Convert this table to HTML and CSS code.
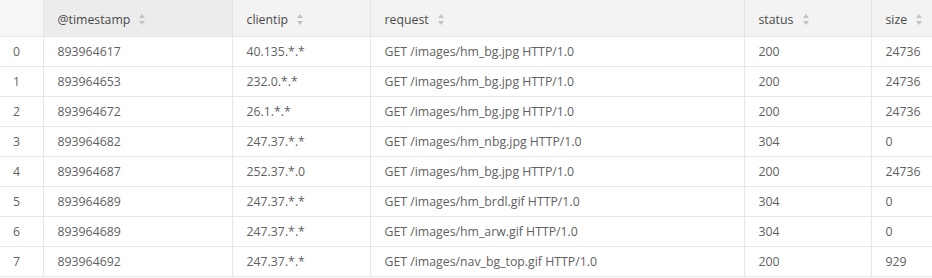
FILE: index.html
```html
<!DOCTYPE html>
<html lang="en">
<head>
    <meta charset="UTF-8">
    <title>Logs table</title>
    <link rel="stylesheet" href="styles.css">
</head>
<body>
    <table class="log-table">
        <colgroup>
            <col class="col-index">
            <col class="col-ts">
            <col class="col-ip">
            <col class="col-req">
            <col class="col-status">
            <col class="col-size">
        </colgroup>
        <thead>
            <tr>
                <th class="index-cell"></th>
                <th class="sorted">@timestamp <span class="sort-icon"></span></th>
                <th>clientip <span class="sort-icon"></span></th>
                <th>request <span class="sort-icon"></span></th>
                <th>status <span class="sort-icon"></span></th>
                <th>size <span class="sort-icon"></span></th>
            </tr>
        </thead>
        <tbody>
            <tr><td class="index-cell">0</td><td>893964617</td><td>40.135.*.*</td><td>GET /images/hm_bg.jpg HTTP/1.0</td><td>200</td><td>24736</td></tr>
            <tr><td class="index-cell">1</td><td>893964653</td><td>232.0.*.*</td><td>GET /images/hm_bg.jpg HTTP/1.0</td><td>200</td><td>24736</td></tr>
            <tr><td class="index-cell">2</td><td>893964672</td><td>26.1.*.*</td><td>GET /images/hm_bg.jpg HTTP/1.0</td><td>200</td><td>24736</td></tr>
            <tr><td class="index-cell">3</td><td>893964682</td><td>247.37.*.*</td><td>GET /images/hm_nbg.jpg HTTP/1.0</td><td>304</td><td>0</td></tr>
            <tr><td class="index-cell">4</td><td>893964687</td><td>252.37.*.0</td><td>GET /images/hm_bg.jpg HTTP/1.0</td><td>200</td><td>24736</td></tr>
            <tr><td class="index-cell">5</td><td>893964689</td><td>247.37.*.*</td><td>GET /images/hm_brdl.gif HTTP/1.0</td><td>304</td><td>0</td></tr>
            <tr><td class="index-cell">6</td><td>893964689</td><td>247.37.*.*</td><td>GET /images/hm_arw.gif HTTP/1.0</td><td>304</td><td>0</td></tr>
            <tr><td class="index-cell">7</td><td>893964692</td><td>247.37.*.*</td><td>GET /images/nav_bg_top.gif HTTP/1.0</td><td>200</td><td>929</td></tr>
        </tbody>
    </table>
</body>
</html>
```
FILE: styles.css
```css
* {
    box-sizing: border-box;
}

body {
    margin: 0;
    background: #fff;
    font-family: 'Open Sans', sans-serif;
    font-size: 12.3px;
    color: #5f5f5f;
}

.log-table {
    width: 932px;
    border-collapse: collapse;
    table-layout: fixed;
}

.col-index { width: 43px; }
.col-ts { width: 189px; }
.col-ip { width: 138px; }
.col-req { width: 374px; }
.col-status { width: 127px; }
.col-size { width: 61px; }

.log-table th,
.log-table td {
    text-align: left;
    padding: 0 0 0 14px;
    border-right: 1px solid #e6e6e6;
    border-bottom: 1px solid #e6e6e6;
    white-space: nowrap;
    overflow: hidden;
}

.log-table th:last-child,
.log-table td:last-child {
    border-right: none;
}

.log-table thead tr {
    height: 36px;
}

.log-table tbody tr {
    height: 30px;
}

.log-table th {
    background: #f3f3f3;
    font-weight: normal;
    color: #4a4a4a;
    padding-top: 3px;
}

.log-table th.sorted {
    background: #ececec;
}

.log-table th.index-cell {
    background: #f6f6f6;
}

.log-table .index-cell {
    padding-left: 13px;
}

.sort-icon {
    display: inline-block;
    position: relative;
    width: 7px;
    height: 11px;
    margin-left: 6px;
    vertical-align: -1px;
}

.sort-icon::before,
.sort-icon::after {
    content: "";
    position: absolute;
    left: 0;
    border-left: 3.5px solid transparent;
    border-right: 3.5px solid transparent;
}

.sort-icon::before {
    top: 0;
    border-bottom: 4px solid #c2c2c2;
}

.sort-icon::after {
    bottom: 0;
    border-top: 4px solid #c2c2c2;
}
```
